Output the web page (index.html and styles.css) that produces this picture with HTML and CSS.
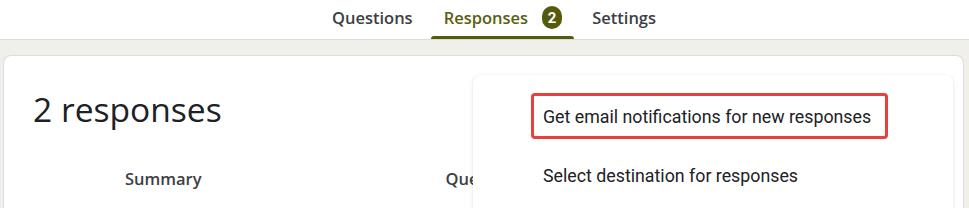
FILE: index.html
```html
<!DOCTYPE html>
<html>
<head>
<meta charset="utf-8">
<link rel="stylesheet" href="styles.css">
</head>
<body>
<header class="topbar">
  <nav class="tabs">
    <div class="tab">Questions</div>
    <div class="tab active">Responses <span class="badge">2</span></div>
    <div class="tab">Settings</div>
  </nav>
</header>
<main class="page">
  <section class="card">
    <h1 class="title">2 responses</h1>
    <div class="subtabs">
      <div class="subtab">Summary</div>
      <div class="subtab">Question</div>
    </div>
  </section>
</main>
<div class="menu">
  <div class="item highlighted">Get email notifications for new responses</div>
  <div class="item">Select destination for responses</div>
</div>
</body>
</html>
```
FILE: styles.css
```css
* { box-sizing: border-box; }
html, body { margin: 0; padding: 0; }
body {
  width: 969px;
  height: 208px;
  overflow: hidden;
  background: #f0efe9;
  font-family: Roboto, "Open Sans", sans-serif;
  position: relative;
}
.topbar {
  height: 40px;
  background: #ffffff;
  border-bottom: 1px solid #dadce0;
}
.tabs {
  display: flex;
  justify-content: center;
  gap: 5px;
  padding-left: 19px;
  height: 39px;
}
.tab {
  display: flex;
  align-items: center;
  padding: 0 13px 4px;
  font-family: "Open Sans", Roboto, sans-serif;
  font-size: 16.5px;
  font-weight: 600;
  color: #3c4043;
  position: relative;
}
.tab.active { color: #5b5e0f; padding-right: 12px; }
.tab.active::after {
  content: "";
  position: absolute;
  left: 0; right: 0; bottom: 0;
  height: 3px;
  background: #565a0c;
  border-radius: 3px 3px 0 0;
}
.badge {
  display: inline-flex;
  align-items: center;
  justify-content: center;
  width: 20px;
  height: 23px;
  margin-left: 14px;
  border-radius: 10px;
  background: #565a0c;
  color: #ffffff;
  font-family: Roboto, sans-serif;
  font-size: 15px;
  font-weight: 700;
}
.page { padding: 15px 5px 0 3px; }
.card {
  background: #ffffff;
  border: 1px solid #dadce0;
  border-bottom: 0;
  border-radius: 8px 8px 0 0;
  height: 153px;
  padding: 31px 0 0 29px;
}
.title {
  margin: 0;
  font-family: "Open Sans", Roboto, sans-serif;
  font-size: 33.6px;
  font-weight: 400;
  color: #202124;
  line-height: 44px;
}
.subtabs {
  display: flex;
  margin-top: 36px;
  padding-left: 92px;
  gap: 244px;
}
.subtab {
  font-family: "Open Sans", Roboto, sans-serif;
  font-size: 16.5px;
  font-weight: 600;
  color: #3c4043;
}
.menu {
  position: absolute;
  left: 473px;
  top: 75px;
  width: 480px;
  height: 133px;
  background: #ffffff;
  border-radius: 8px 8px 0 0;
  box-shadow: 0 1px 3px rgba(60,64,67,0.12), 0 2px 6px rgba(60,64,67,0.06);
  padding: 18px 0 0 58px;
}
.item {
  width: 357px;
  height: 46px;
  display: flex;
  align-items: center;
  padding-left: 9px;
  border: 3px solid transparent;
  font-size: 17.8px;
  color: #202124;
  margin-bottom: 13px;
}
.item.highlighted {
  border-color: #e8403f;
  border-radius: 4px;
}
```
